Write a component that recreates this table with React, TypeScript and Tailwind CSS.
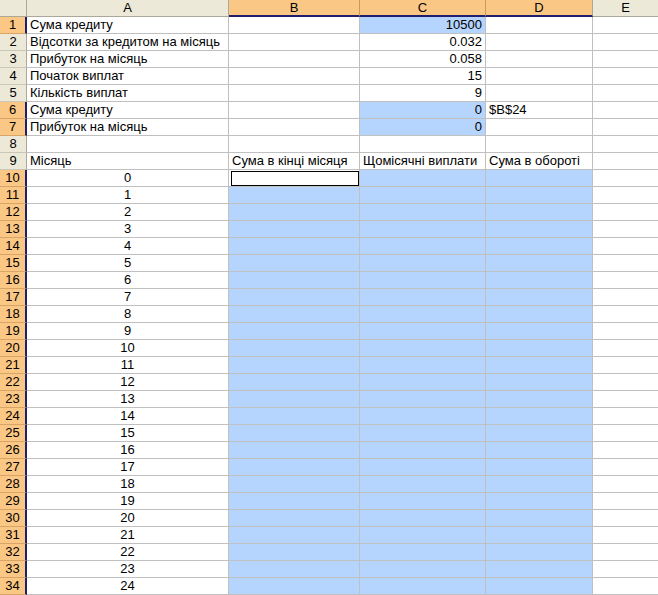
import React from "react";

const COLS = "grid grid-cols-[27px_202px_131px_126px_107px_65px]";
const BLUE = "bg-[#b5d5ff]";
const ORANGE = "bg-[#fbc784]";
const BEIGE = "bg-[#ece9d8]";

type Cell = { text?: string; align?: "l" | "r" | "c"; blue?: boolean; active?: boolean };

const top: Record<number, Cell[]> = {
  1: [{ text: "Сума кредиту" }, {}, { text: "10500", align: "r", blue: true }, {}, {}],
  2: [{ text: "Відсотки за кредитом на місяць" }, {}, { text: "0.032", align: "r" }, {}, {}],
  3: [{ text: "Прибуток на місяць" }, {}, { text: "0.058", align: "r" }, {}, {}],
  4: [{ text: "Початок виплат" }, {}, { text: "15", align: "r" }, {}, {}],
  5: [{ text: "Кількість виплат" }, {}, { text: "9", align: "r" }, {}, {}],
  6: [{ text: "Сума кредиту" }, {}, { text: "0", align: "r", blue: true }, { text: "$B$24" }, {}],
  7: [{ text: "Прибуток на місяць" }, {}, { text: "0", align: "r", blue: true }, {}, {}],
  8: [{}, {}, {}, {}, {}],
  9: [
    { text: "Місяць" },
    { text: "Сума в кінці місяця" },
    { text: "Щомісячні виплати" },
    { text: "Сума в обороті" },
    {},
  ],
};

function getRow(n: number): Cell[] {
  if (top[n]) return top[n];
  return [
    { text: String(n - 10), align: "c" },
    { blue: n !== 10, active: n === 10 },
    { blue: true },
    { blue: true },
    {},
  ];
}

const selectedRows = new Set([1, 6, 7]);

export default function App() {
  const rows = Array.from({ length: 34 }, (_, i) => i + 1);
  return (
    <div className="w-[658px] h-[595px] overflow-hidden bg-white text-[13px] leading-[16px] text-black font-['Liberation_Sans',Arial,sans-serif]">
      {/* header */}
      <div className={`${COLS} h-[17px]`}>
        <div className={`${BEIGE} border-r border-b border-[#aca899]`} />
        <div className={`${BEIGE} border-r border-b border-[#aca899] text-center`}>A</div>
        <div className={`${ORANGE} border-r border-r-[#c59a5e] border-b-2 border-b-[#1f1f6e] text-center leading-[15px]`}>B</div>
        <div className={`${ORANGE} border-r border-r-[#c59a5e] border-b-2 border-b-[#1f1f6e] text-center leading-[15px]`}>C</div>
        <div className={`${ORANGE} border-r border-r-[#aca899] border-b-2 border-b-[#1f1f6e] text-center leading-[15px]`}>D</div>
        <div className={`${BEIGE} border-b border-[#aca899] text-center`}>E</div>
      </div>
      {rows.map((n) => {
        const sel = selectedRows.has(n) || n >= 10;
        const cells = getRow(n);
        return (
          <div key={n} className={`${COLS} h-[17px]`}>
            <div
              className={`${sel ? `${ORANGE} border-r-2 border-r-[#1f1f6e] border-b-[#d9a566]` : `${BEIGE} border-r border-r-[#aca899] border-b-[#cbc7b8]`} border-b text-center`}
            >
              {n}
            </div>
            {cells.map((c, i) => (
              <div
                key={i}
                className={`relative border-b border-[#c0c0c0] ${i < 4 ? "border-r" : ""} ${c.blue ? BLUE : ""} whitespace-nowrap overflow-visible px-[3px] ${
                  c.align === "r" ? "text-right" : c.align === "c" ? "text-center" : "text-left"
                }`}
              >
                {c.text}
                {c.active && (
                  <div className="absolute left-[2px] right-0 top-[1px] bottom-0 border border-black" />
                )}
              </div>
            ))}
          </div>
        );
      })}
    </div>
  );
}
